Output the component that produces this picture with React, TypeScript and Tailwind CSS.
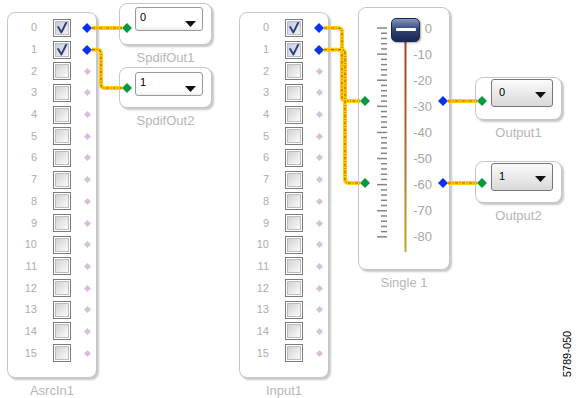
import React from "react";

const FONT = "font-['Liberation_Sans',Arial,Helvetica,sans-serif]";

function Diamond({ fill, size }: { fill: string; size: number }) {
  const h = size / 2;
  return (
    <svg width={size} height={size} viewBox={`0 0 ${size} ${size}`} className="block">
      <polygon points={`${h},0 ${size},${h} ${h},${size} 0,${h}`} fill={fill} />
    </svg>
  );
}

function CheckBox({ checked }: { checked: boolean }) {
  return (
    <div className="h-[18px] w-[18px] border border-[#7c7c7c] bg-white p-[1px]">
      <div
        className={`relative h-full w-full border border-[#bdbdbd] bg-gradient-to-br ${
          checked ? "from-[#c4cade] to-[#f4f5fa]" : "from-[#d2d2d2] to-[#fbfbfb]"
        }`}
      >
        {checked && (
          <svg className="absolute left-0 top-0" width="12" height="12" viewBox="0 0 12 12">
            <path
              d="M2.2 5 L5.4 10.4 L10.2 0.8"
              fill="none"
              stroke="#34427a"
              strokeWidth="2"
              strokeLinecap="round"
              strokeLinejoin="round"
            />
          </svg>
        )}
      </div>
    </div>
  );
}

const BLOCK =
  "rounded-[8px] border border-[#c6c6c6] bg-white shadow-[2px_2px_2px_rgba(0,0,0,0.22)]";

function Label({ children }: { children: React.ReactNode }) {
  return <div className="mt-[5px] whitespace-nowrap text-[13px] leading-[15px] text-[#b6b6b6]">{children}</div>;
}

function ChannelBlock() {
  return (
    <div className={`flex h-[366px] w-[90px] flex-col pt-[4px] ${BLOCK}`}>
      {Array.from({ length: 16 }, (_, n) => (
        <div key={n} className="flex h-[21.7px] shrink-0 items-center">
          <span className="w-[29px] text-right text-[11px] leading-none text-[#adadad]">{n}</span>
          <div className="ml-[16px]">
            <CheckBox checked={n < 2} />
          </div>
          <div className="ml-[11px] flex w-[10px] justify-center">
            {n < 2 ? <Diamond fill="#0a32f0" size={10} /> : <Diamond fill="#d9bedb" size={7} />}
          </div>
        </div>
      ))}
    </div>
  );
}

function Triangle() {
  return (
    <svg width="11" height="6" viewBox="0 0 11 6" className="block">
      <polygon points="0,0 11,0 5.5,6" fill="#111" />
    </svg>
  );
}

function SpdifDropdown({ value }: { value: string }) {
  return (
    <div className="flex h-[24px] w-[68px] justify-between rounded-[3px] border border-[#9a9a9a] bg-white pl-[4px] pr-[6px] shadow-[inset_0_-2px_3px_rgba(0,0,0,0.07)]">
      <span className="pt-[3px] text-[11px] leading-[12px] text-black">{value}</span>
      <div className="mt-[13px]">
        <Triangle />
      </div>
    </div>
  );
}

function OutDropdown({ value }: { value: string }) {
  return (
    <div className="flex h-[28px] w-[62px] items-center justify-between rounded-[3px] border border-[#777] bg-gradient-to-b from-[#fbfbfb] to-[#d9d9d9] pl-[7px] pr-[6px]">
      <span className="mb-[2px] text-[11px] leading-[12px] text-black">{value}</span>
      <div className="mt-[3px]">
        <Triangle />
      </div>
    </div>
  );
}

const LABELS = ["0", "-10", "-20", "-30", "-40", "-50", "-60", "-70", "-80"];

function Ticks() {
  const items: React.ReactNode[] = [];
  for (let i = 0; i <= 40; i++) {
    const y = 13.05 + i * 5.22;
    const long = i % 5 === 0;
    items.push(
      <line key={i} x1={long ? 0 : 4} x2={10} y1={y} y2={y} stroke="#858585" strokeWidth="1.5" />
    );
  }
  return (
    <svg width="11" height="235" viewBox="0 0 11 235" className="block">
      {items}
    </svg>
  );
}

function SliderBlock() {
  return (
    <div className={`flex h-[263px] w-[92px] pl-[18px] pt-[7px] ${BLOCK}`}>
      <Ticks />
      <div className="relative ml-[10px] flex w-[14px] flex-col items-center">
        <svg width="3" height="210" viewBox="0 0 3 210" className="mt-[27px] block">
          <defs>
            <linearGradient id="trk" x1="0" y1="0" x2="0" y2="1">
              <stop offset="0" stopColor="#a8401e" />
              <stop offset="0.55" stopColor="#b0702a" />
              <stop offset="1" stopColor="#c0a820" />
            </linearGradient>
          </defs>
          <rect x="0.5" y="0" width="2" height="210" fill="url(#trk)" />
        </svg>
        <div className="absolute left-[-7px] top-[3px] flex h-[24px] w-[29px] items-start justify-center rounded-[5px] border border-[#1b2750] bg-gradient-to-b from-[#8496c0] via-[#2f4272] to-[#1b2a55] pt-[9px] shadow-[1px_1px_2px_rgba(0,0,0,0.35)]">
          <div className="h-[3px] w-[20px] rounded-[1px] bg-white" />
        </div>
      </div>
      <div className="flex w-[20px] flex-col">
        {LABELS.map((l) => (
          <div
            key={l}
            className="flex h-[26.1px] shrink-0 items-center justify-end whitespace-nowrap text-[13px] leading-none text-[#a6a6a6]"
          >
            {l}
          </div>
        ))}
      </div>
    </div>
  );
}

function Wire({ d }: { d: string }) {
  return (
    <g>
      <path d={d} fill="none" stroke="#ffcf00" strokeWidth="4" strokeLinejoin="round" />
      <path
        d={d}
        fill="none"
        stroke="#c0560a"
        strokeWidth="1.2"
        strokeDasharray="3 1.5 1 1.5"
        strokeLinejoin="round"
      />
    </g>
  );
}

function Pin({ x, y, fill }: { x: number; y: number; fill: string }) {
  return <polygon points={`${x},${y - 5} ${x + 5},${y} ${x},${y + 5} ${x - 5},${y}`} fill={fill} />;
}

export default function App() {
  return (
    <div className={`relative h-[398px] w-[586px] overflow-hidden bg-white ${FONT}`}>
      <div className="absolute left-[7px] top-[12px] flex flex-col items-center">
        <ChannelBlock />
        <Label>AsrcIn1</Label>
      </div>

      <div className="absolute left-[239px] top-[12px] flex flex-col items-center">
        <ChannelBlock />
        <Label>Input1</Label>
      </div>

      <div className="absolute left-[119px] top-[3px] flex flex-col items-center">
        <div className={`h-[42px] w-[93px] pl-[15px] pt-[3px] ${BLOCK}`}>
          <SpdifDropdown value="0" />
        </div>
        <Label>SpdifOut1</Label>
      </div>

      <div className="absolute left-[119px] top-[67px] flex flex-col items-center">
        <div className={`h-[41px] w-[93px] pl-[15px] pt-[4px] ${BLOCK}`}>
          <SpdifDropdown value="1" />
        </div>
        <Label>SpdifOut2</Label>
      </div>

      <div className="absolute left-[358px] top-[7px] flex flex-col items-center">
        <SliderBlock />
        <Label>Single 1</Label>
      </div>

      <div className="absolute left-[475px] top-[77px] flex flex-col items-center">
        <div className={`h-[43px] w-[87px] pl-[15px] pt-[1px] ${BLOCK}`}>
          <OutDropdown value="0" />
        </div>
        <Label>Output1</Label>
      </div>

      <div className="absolute left-[475px] top-[161px] flex flex-col items-center">
        <div className={`h-[42px] w-[87px] pl-[15px] pt-[1px] ${BLOCK}`}>
          <OutDropdown value="1" />
        </div>
        <Label>Output2</Label>
      </div>

      <svg
        className="pointer-events-none absolute left-0 top-0 z-10"
        width="586"
        height="398"
        viewBox="0 0 586 398"
      >
        <Wire d="M92 28 H122" />
        <Wire d="M92 49.7 H97 Q101 49.7 101 53.7 V84 Q101 88 105 88 H122" />
        <Wire d="M324 28 H338 Q342 28 342 32 V97 Q342 101 346 101 H360" />
        <Wire d="M324 49.7 H341 Q345 49.7 345 53.7 V179 Q345 183 349 183 H360" />
        <Wire d="M448 101 H477" />
        <Wire d="M448 183 H477" />
        <Pin x={127} y={28} fill="#079a3c" />
        <Pin x={127} y={88} fill="#079a3c" />
        <Pin x={365} y={101} fill="#079a3c" />
        <Pin x={365} y={183} fill="#079a3c" />
        <Pin x={482} y={101} fill="#079a3c" />
        <Pin x={482} y={183} fill="#079a3c" />
        <Pin x={443} y={101} fill="#0a32f0" />
        <Pin x={443} y={183} fill="#0a32f0" />
      </svg>

      <div className="absolute left-[543px] top-[348px] w-[48px] -rotate-90 whitespace-nowrap text-center text-[11px] leading-[12px] text-black">
        5789-050
      </div>
    </div>
  );
}
